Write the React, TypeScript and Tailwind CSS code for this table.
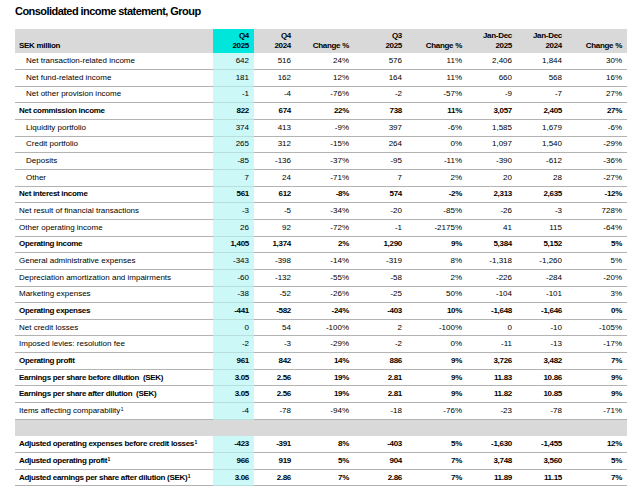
type Row = {
  label?: string
  values?: string[]
  bold?: boolean
  indent?: boolean
  note?: boolean
  blank?: boolean
}

const rows: Row[] = [
  { label: "Net transaction-related income", indent: true, values: ["642", "516", "24%", "576", "11%", "2,406", "1,844", "30%"] },
  { label: "Net fund-related income", indent: true, values: ["181", "162", "12%", "164", "11%", "660", "568", "16%"] },
  { label: "Net other provision income", indent: true, values: ["-1", "-4", "-76%", "-2", "-57%", "-9", "-7", "27%"] },
  { label: "Net commission income", bold: true, values: ["822", "674", "22%", "738", "11%", "3,057", "2,405", "27%"] },
  { label: "Liquidity portfolio", indent: true, values: ["374", "413", "-9%", "397", "-6%", "1,585", "1,679", "-6%"] },
  { label: "Credit portfolio", indent: true, values: ["265", "312", "-15%", "264", "0%", "1,097", "1,540", "-29%"] },
  { label: "Deposits", indent: true, values: ["-85", "-136", "-37%", "-95", "-11%", "-390", "-612", "-36%"] },
  { label: "Other", indent: true, values: ["7", "24", "-71%", "7", "2%", "20", "28", "-27%"] },
  { label: "Net interest income", bold: true, values: ["561", "612", "-8%", "574", "-2%", "2,313", "2,635", "-12%"] },
  { label: "Net result of financial transactions", values: ["-3", "-5", "-34%", "-20", "-85%", "-26", "-3", "728%"] },
  { label: "Other operating income", values: ["26", "92", "-72%", "-1", "-2175%", "41", "115", "-64%"] },
  { label: "Operating income", bold: true, values: ["1,405", "1,374", "2%", "1,290", "9%", "5,384", "5,152", "5%"] },
  { label: "General administrative expenses", values: ["-343", "-398", "-14%", "-319", "8%", "-1,318", "-1,260", "5%"] },
  { label: "Depreciation amortization and impairments", values: ["-60", "-132", "-55%", "-58", "2%", "-226", "-284", "-20%"] },
  { label: "Marketing expenses", values: ["-38", "-52", "-26%", "-25", "50%", "-104", "-101", "3%"] },
  { label: "Operating expenses", bold: true, values: ["-441", "-582", "-24%", "-403", "10%", "-1,648", "-1,646", "0%"] },
  { label: "Net credit losses", values: ["0", "54", "-100%", "2", "-100%", "0", "-10", "-105%"] },
  { label: "Imposed levies: resolution fee", values: ["-2", "-3", "-29%", "-2", "0%", "-11", "-13", "-17%"] },
  { label: "Operating profit", bold: true, values: ["961", "842", "14%", "886", "9%", "3,726", "3,482", "7%"] },
  { label: "Earnings per share before dilution  (SEK)", bold: true, values: ["3.05", "2.56", "19%", "2.81", "9%", "11.83", "10.86", "9%"] },
  { label: "Earnings per share after dilution  (SEK)", bold: true, values: ["3.05", "2.56", "19%", "2.81", "9%", "11.82", "10.85", "9%"] },
  { label: "Items affecting comparability", note: true, values: ["-4", "-78", "-94%", "-18", "-76%", "-23", "-78", "-71%"] },
  { blank: true },
  { label: "Adjusted operating expenses before credit losses", note: true, bold: true, values: ["-423", "-391", "8%", "-403", "5%", "-1,630", "-1,455", "12%"] },
  { label: "Adjusted operating profit", note: true, bold: true, values: ["966", "919", "5%", "904", "7%", "3,748", "3,560", "5%"] },
  { label: "Adjusted earnings per share after dilution (SEK)", note: true, bold: true, values: ["3.06", "2.86", "7%", "2.86", "7%", "11.89", "11.15", "7%"] },
]

const headers = [
  ["Q4", "2025"],
  ["Q4", "2024"],
  ["", "Change %"],
  ["Q3", "2025"],
  ["", "Change %"],
  ["Jan-Dec", "2025"],
  ["Jan-Dec", "2024"],
  ["", "Change %"],
]

const grid = "grid grid-cols-[198px_41px_42px_58px_53px_60px_50px_50px_60px]"

export default function App() {
  return (
    <div className="w-[640px] h-[499px] bg-white text-black font-['Liberation_Sans',Arial,sans-serif] px-[15px] pt-[5px]">
      {/* Title */}
      <h1 className="text-[11px] leading-[13px] font-bold tracking-[-0.55px]">
        Consolidated income statement, Group
      </h1>

      <div className="mt-[11px] w-[612px] text-[8px] leading-[10px]">
        {/* Header */}
        <div className={`${grid} h-[24.33px] bg-[#d9d9d9] font-bold tracking-[-0.3px]`}>
          <div className="flex items-end pl-[4px] pb-[2px]">SEK million</div>
          {headers.map((h, i) => (
            <div
              key={i}
              className={`flex flex-col items-end justify-end pr-[5px] pb-[2px] ${i === 0 ? "bg-[#00e6dc]" : ""}`}
            >
              <span>{h[0]}</span>
              <span>{h[1]}</span>
            </div>
          ))}
        </div>

        {/* Body */}
        {rows.map((row, r) =>
          row.blank ? (
            <div key={r} className="h-[16.67px] bg-[#d9d9d9] border-b border-[#d9d9d9]" />
          ) : (
            <div key={r} className={`${grid} h-[16.67px] ${row.bold ? "font-bold tracking-[-0.3px]" : ""}`}>
              <div
                className={`flex items-center whitespace-pre border-b border-[#b3b3b3] ${row.indent ? "pl-[11px]" : "pl-[4px]"}`}
              >
                {row.label}
                {row.note && <span className="text-[5px] leading-[5px] mb-[3px] ml-[0.5px]">1</span>}
              </div>
              {row.values!.map((v, i) => (
                <div
                  key={i}
                  className={`flex items-center justify-end pr-[5px] border-b ${
                    i === 0 ? "bg-[#ccf8f7] border-[#b9dede]" : "border-[#b3b3b3]"
                  }`}
                >
                  {v}
                </div>
              ))}
            </div>
          )
        )}
      </div>
    </div>
  )
}
